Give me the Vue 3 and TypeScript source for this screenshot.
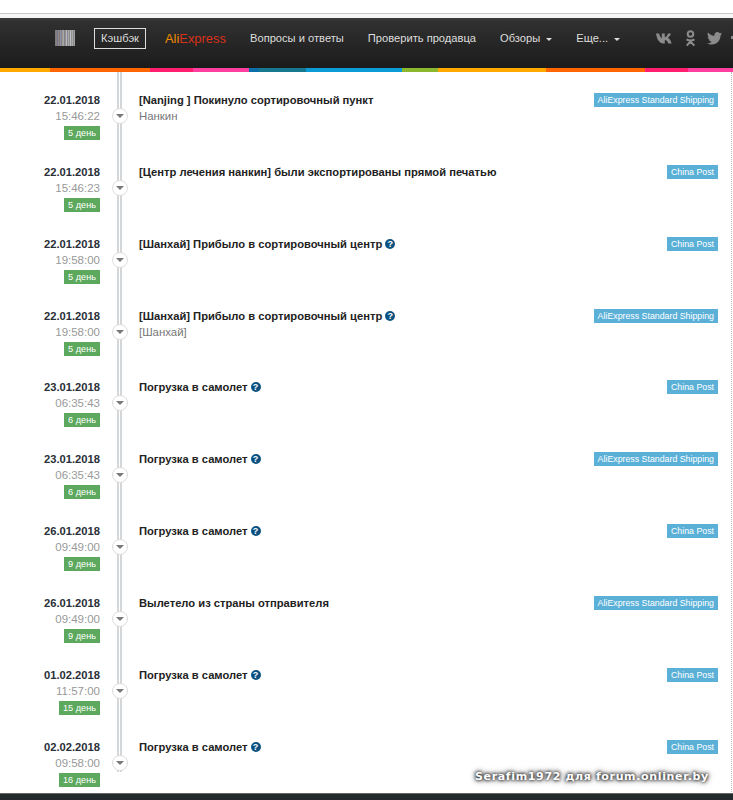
<script setup lang="ts">
// Трекинг посылки: шапка сайта и таймлайн событий
interface TrackEvent {
  date: string;
  time: string;
  days: string;
  title: string;
  place?: string;
  help?: boolean;
  carrier: string;
}

const ALI = "AliExpress Standard Shipping";
const POST = "China Post";
const LOAD = "Погрузка в самолет";
const SH = "[Шанхай] Прибыло в сортировочный центр";

const events: TrackEvent[] = [
  { date: "22.01.2018", time: "15:46:22", days: "5 день", title: "[Nanjing ] Покинуло сортировочный пункт", place: "Нанкин", carrier: ALI },
  { date: "22.01.2018", time: "15:46:23", days: "5 день", title: "[Центр лечения нанкин] были экспортированы прямой печатью", carrier: POST },
  { date: "22.01.2018", time: "19:58:00", days: "5 день", title: SH, help: true, carrier: POST },
  { date: "22.01.2018", time: "19:58:00", days: "5 день", title: SH, place: "[Шанхай]", help: true, carrier: ALI },
  { date: "23.01.2018", time: "06:35:43", days: "6 день", title: LOAD, help: true, carrier: POST },
  { date: "23.01.2018", time: "06:35:43", days: "6 день", title: LOAD, help: true, carrier: ALI },
  { date: "26.01.2018", time: "09:49:00", days: "9 день", title: LOAD, help: true, carrier: POST },
  { date: "26.01.2018", time: "09:49:00", days: "9 день", title: "Вылетело из страны отправителя", carrier: ALI },
  { date: "01.02.2018", time: "11:57:00", days: "15 день", title: LOAD, help: true, carrier: POST },
  { date: "02.02.2018", time: "09:58:00", days: "16 день", title: LOAD, help: true, carrier: POST },
];

const strip = [
  { w: 50, c: "#ffa800" }, { w: 100, c: "#ff6600" }, { w: 43, c: "#ff1f6e" }, { w: 56, c: "#ff3fa0" },
  { w: 10, c: "#0a6ea8" }, { w: 47, c: "#17788f" }, { w: 96, c: "#0b9bd6" }, { w: 36, c: "#8cb82f" },
  { w: 108, c: "#ffa800" }, { w: 99, c: "#ff6600" }, { w: 43, c: "#ff1f6e" }, { w: 45, c: "#ff3fa0" },
];

const bars = [
  "#7d7d7d", "#8a7d82", "#74768a", "#8a8a8a", "#85767f", "#9090a0", "#7c8690", "#a09890", "#a8a8a8", "#80808f",
  "#989088", "#b8b8b8", "#8c8698", "#a8a8a8", "#848c8e", "#c0c0c0", "#929292", "#aca8b0", "#888888", "#a0a0a0",
];
</script>

<template>
  <div class="page">
    <div class="browser-top"><div class="browser-line"></div></div>
    <header class="head">
      <svg class="barcode" width="20" height="16" viewBox="0 0 20 16">
        <rect v-for="(c, i) in bars" :key="i" :x="i" y="0" width="1" height="16" :fill="c" />
      </svg>
      <a class="cash">Кэшбэк</a>
      <a class="ali"><span class="ali-a">Ali</span><span class="ali-e">Express</span></a>
      <nav class="nav">
        <a>Вопросы и ответы</a>
        <a>Проверить продавца</a>
        <a>Обзоры<i class="caret"></i></a>
        <a>Еще...<i class="caret"></i></a>
      </nav>
      <div class="social">
        <svg width="18" height="11" viewBox="0 0 18 11"><path fill="#8b8b8b" d="M0 .4h3.1c.4 2 1.600 4.300 2.700 4.800V.4h3v3.900C9.900 4 11.300 2.500 12 .4h2.900c-.4 2-1.900 3.500-3 4.300 1.200.7 2.900 2.200 3.700 5.900h-3.200c-.6-1.900-2-3.300-3.600-3.500v3.500H8.400C3.800 10.600 1 7 0 .4z"/></svg>
        <svg width="11" height="17" viewBox="0 0 11 17"><g fill="none" stroke="#8b8b8b" stroke-width="2"><circle cx="5.500" cy="4" r="2.800"/><path d="M1.500 9.300c2.500 1.500 5.500 1.500 8 0M5.500 10.500v1l-3.800 4.200M5.500 11.500l3.800 4.200"/></g></svg>
        <svg width="15" height="13" viewBox="0 0 15 13"><path fill="#8b8b8b" d="M15 1.600c-.5.300-1.100.4-1.700.5.600-.4 1.100-1 1.300-1.700-.6.400-1.200.6-1.900.8C12.100.5 11.300.1 10.400.1 8.700.1 7.300 1.500 7.300 3.200c0 .2 0 .5.100.7C4.800 3.800 2.600 2.600 1 .6.800 1.100.6 1.600.6 2.200c0 1.100.5 2 1.400 2.600-.5 0-1-.2-1.400-.4 0 1.500 1.100 2.800 2.500 3.100-.5.100-1 .1-1.400 0 .4 1.200 1.500 2.100 2.900 2.200C3.500 10.800 1.800 11.400 0 11.200 1.400 12.100 3 12.600 4.700 12.600c5.700 0 8.800-4.700 8.800-8.800v-.4c.6-.4 1.100-1 1.500-1.800z"/></svg>
      </div>
      <span class="cut-icon"></span>
    </header>
    <div class="strip">
      <span v-for="(s, i) in strip" :key="i" :style="{ width: s.w + 'px', background: s.c }"></span>
    </div>

    <main class="timeline">
      <div class="rail"></div>
      <section v-for="(e, i) in events" :key="i" class="event">
        <div class="when">
          <div class="date">{{ e.date }}</div>
          <div class="time">{{ e.time }}</div>
          <span class="days">{{ e.days }}</span>
        </div>
        <div class="mark"><span class="dot"><i></i></span></div>
        <div class="what">
          <div class="title">{{ e.title }}<span v-if="e.help" class="help">?</span></div>
          <div v-if="e.place" class="place">{{ e.place }}</div>
        </div>
        <div class="carrier"><span>{{ e.carrier }}</span></div>
      </section>
    </main>

    <footer class="foot"></footer>
    <div class="mark-text">Serafim1972 для forum.onliner.by</div>
  </div>
</template>

<style>
html, body { margin: 0; background: #fff; }
</style>

<style scoped>
.page { position: relative; width: 733px; height: 800px; overflow: hidden; display: flex; flex-direction: column; font-family: "Liberation Sans", Arial, sans-serif; font-size: 11.15px; background: #fff; }
.browser-top { height: 18px; flex: none; padding-top: 13px; box-sizing: border-box; background: #f6f6f6; }
.browser-line { height: 1px; background: #c4c8c8; box-shadow: 0 -13px 0 13px #fff; }
.head { flex: none; height: 50px; padding: 0 0 10px 55px; display: flex; align-items: center; background: linear-gradient(#3c3c3c, #303030 8%, #1b1b1b); box-sizing: border-box; color: #ddd; position: relative; }
.barcode { flex: none; margin-right: 19px; }
.cash { box-sizing: border-box; width: 52px; height: 21px; border: 1px solid #ddd; text-align: center; line-height: 19px; margin-right: 19px; flex: none; }
.ali { width: 61px; font-size: 12.9px; margin-right: 24px; flex: none; white-space: nowrap; }
.ali-a { color: #f08a00; }
.ali-e { color: #d8321a; }
.nav { display: flex; gap: 24px; white-space: nowrap; flex: none; }
.caret { display: inline-block; margin-left: 6px; vertical-align: middle; border-left: 3px solid transparent; border-right: 3px solid transparent; border-top: 3px solid #ddd; }
.social { display: flex; align-items: center; gap: 11px; margin-left: 36px; flex: none; }
.cut-icon { position: absolute; left: 731px; top: 18px; width: 2px; height: 3px; background: #8b8b8b; }
.strip { flex: none; height: 4px; display: flex; }
.strip span { display: block; height: 4px; }
.timeline { position: relative; flex: 1; min-height: 0; padding-top: 18px; overflow: hidden; border-right: 1px dotted #bbb; margin-right: 1px; }
.rail { position: absolute; left: 117px; top: 0; width: 1px; height: 700px; border-left: 2px solid #d4d7da; border-right: 2px solid #d4d7da; }
.event { position: relative; height: 71.85px; display: flex; align-items: flex-start; color: #222; }
.when { width: 100px; flex: none; text-align: right; }
.date { font-size: 11.2px; font-weight: bold; line-height: 20px; color: #2a2f38; }
.time { font-size: 11.5px; color: #999; line-height: 12px; }
.days { display: inline-block; margin-top: 4px; height: 14px; line-height: 14px; padding: 0 4px; background: #5ca85c; color: #fff; font-size: 9.2px; }
.mark { width: 39px; flex: none; position: relative; }
.dot { position: absolute; left: 12px; top: 18px; width: 14px; height: 14px; border: 1px solid #ddd; border-radius: 50%; background: #fff; display: flex; align-items: center; justify-content: center; }
.dot i { border-left: 4px solid transparent; border-right: 4px solid transparent; border-top: 4px solid #777; }
.what { flex: 1; min-width: 0; }
.title { font-size: 11.2px; font-weight: bold; line-height: 20px; color: #222; display: flex; align-items: center; }
.help { margin-left: 3px; width: 10px; height: 10px; border-radius: 50%; background: #0b5280; color: #fff; font-size: 9px; line-height: 10px; text-align: center; }
.place { font-size: 11.4px; color: #777; line-height: 12px; }
.carrier { flex: none; margin-right: 13px; padding-top: 3px; }
.carrier span { display: block; height: 14px; line-height: 14px; padding: 0 4px; background: #5bb0d8; color: #fff; font-size: 8.8px; white-space: nowrap; }
.foot { position: absolute; left: 0; right: 0; bottom: 0; height: 7px; background: #24292b; border-top: 1px solid #666; box-sizing: border-box; }
.mark-text { position: absolute; left: 475px; top: 769px; font-family: "DejaVu Sans", sans-serif; font-weight: bold; font-size: 11px; line-height: 16px; letter-spacing: 0.65px; color: #fff; text-shadow: 0 0 3px #222, 0 0 4px #333, 0 0 6px #555; white-space: nowrap; }
</style>
